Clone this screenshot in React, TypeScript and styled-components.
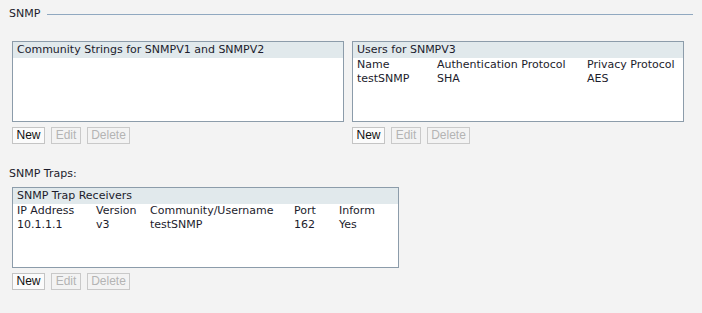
import React from "react";
import styled, { createGlobalStyle } from "styled-components";

const Global = createGlobalStyle`
  html, body { margin: 0; padding: 0; background: #f3f3f3; }
  body { font-family: "DejaVu Sans", Verdana, sans-serif; font-size: 11px; color: #1c1c2c; }
`;

const Page = styled.div`
  width: 702px;
  height: 313px;
  box-sizing: border-box;
  padding: 7px 9px 0 9px;
  display: flex;
  flex-direction: column;
`;

const LegendRow = styled.div`
  display: flex;
  align-items: center;
  height: 14px;
  width: 684px;
  gap: 7px;
`;

const LegendLine = styled.div`
  flex: 1;
  height: 1px;
  background: #90a8c0;
`;

const Label = styled.div<{ $top?: number }>`
  line-height: 14px;
  white-space: nowrap;
  margin-top: ${(p) => p.$top ?? 0}px;
`;

const Content = styled.div`
  padding-left: 3px;
  display: flex;
  flex-direction: column;
`;

const Row = styled.div<{ $top: number }>`
  display: flex;
  gap: 8px;
  margin-top: ${(p) => p.$top}px;
`;

const Group = styled.div`
  display: flex;
  flex-direction: column;
`;

const Box = styled.div<{ $w: number }>`
  width: ${(p) => p.$w}px;
  height: 81px;
  box-sizing: border-box;
  border: 1px solid #8c9caa;
  background: #ffffff;
`;

const BoxHeader = styled.div`
  background: #e1e9ec;
  height: 16px;
  line-height: 16px;
  padding-left: 4px;
  white-space: nowrap;
`;

const Grid = styled.div<{ $cols: string }>`
  display: grid;
  grid-template-columns: ${(p) => p.$cols};
  padding-left: 4px;
  line-height: 14px;
  white-space: nowrap;
`;

const Buttons = styled.div`
  display: flex;
  gap: 6px;
  margin-top: 5px;
`;

const Btn = styled.button<{ $w: number }>`
  width: ${(p) => p.$w}px;
  height: 17px;
  box-sizing: border-box;
  padding: 0;
  border: 1px solid ${(p) => (p.disabled ? "#c9c9c9" : "#c4c4c4")};
  background: ${(p) => (p.disabled ? "#f3f3f3" : "#fbfbfb")};
  color: ${(p) => (p.disabled ? "#b4b4b4" : "#101010")};
  font-family: "Liberation Sans", Arial, sans-serif;
  font-size: 12px;
  line-height: 15px;
  cursor: default;
`;

const ButtonBar = () => (
  <Buttons>
    <Btn $w={33}>New</Btn>
    <Btn $w={30} disabled>Edit</Btn>
    <Btn $w={43} disabled>Delete</Btn>
  </Buttons>
);

export default function App() {
  return (
    <>
      <Global />
      <Page>
        <LegendRow>
          <Label>SNMP</Label>
          <LegendLine />
        </LegendRow>
        <Content>
          <Row $top={20}>
            <Group>
              <Box $w={332}>
                <BoxHeader>Community Strings for SNMPV1 and SNMPV2</BoxHeader>
              </Box>
              <ButtonBar />
            </Group>
            <Group>
              <Box $w={332}>
                <BoxHeader>Users for SNMPV3</BoxHeader>
                <Grid $cols="80px 150px auto">
                  <span>Name</span>
                  <span>Authentication Protocol</span>
                  <span>Privacy Protocol</span>
                  <span>testSNMP</span>
                  <span>SHA</span>
                  <span>AES</span>
                </Grid>
              </Box>
              <ButtonBar />
            </Group>
          </Row>
        </Content>
        <Label $top={23}>SNMP Traps:</Label>
        <Content>
          <Row $top={6}>
            <Group>
              <Box $w={387}>
                <BoxHeader>SNMP Trap Receivers</BoxHeader>
                <Grid $cols="79px 54px 144px 45px auto">
                  <span>IP Address</span>
                  <span>Version</span>
                  <span>Community/Username</span>
                  <span>Port</span>
                  <span>Inform</span>
                  <span>10.1.1.1</span>
                  <span>v3</span>
                  <span>testSNMP</span>
                  <span>162</span>
                  <span>Yes</span>
                </Grid>
              </Box>
              <ButtonBar />
            </Group>
          </Row>
        </Content>
      </Page>
    </>
  );
}
